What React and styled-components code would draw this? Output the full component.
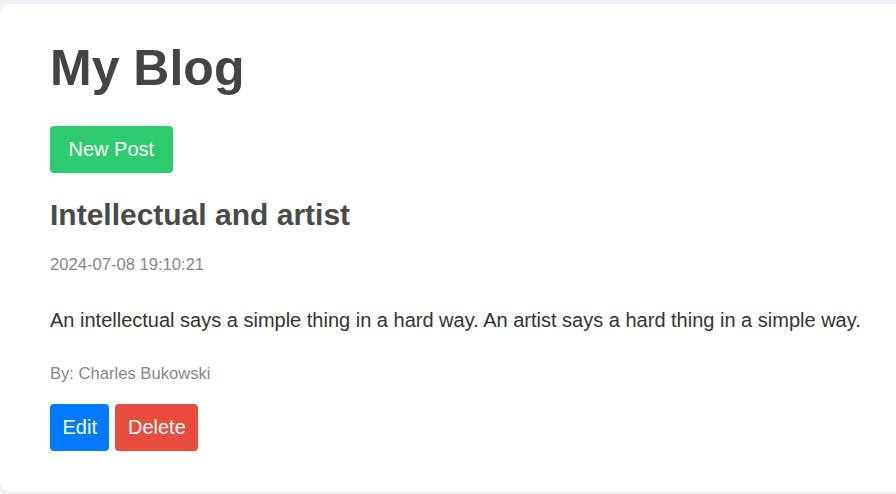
import React from "react";
import styled, { createGlobalStyle } from "styled-components";

const Global = createGlobalStyle`
  html, body { margin: 0; padding: 0; }
  body {
    background: #f0f2f5;
    font-family: "Liberation Sans", Arial, sans-serif;
    overflow: hidden;
  }
`;

const Page = styled.div`
  padding-top: 4px;
  width: 920px;
`;

const Card = styled.main`
  background: #ffffff;
  border-radius: 10px;
  padding: 36px 50px 41px;
  box-shadow: 0 1px 2px rgba(0, 0, 0, 0.08);
`;

const Title = styled.h1`
  margin: 0 0 29px;
  font-size: 50px;
  line-height: 57px;
  font-weight: bold;
  color: #444;
`;

const Button = styled.button`
  display: block;
  border: none;
  border-radius: 4px;
  font-family: inherit;
  font-size: 20px;
  color: #fff;
  padding: 12px ${(p) => p.$px || 18.5}px;
  background: ${(p) => p.$bg};
  cursor: pointer;
  line-height: 23px;
`;

const Post = styled.article`
  margin-top: 25px;
`;

const PostTitle = styled.h2`
  margin: 0 0 23px;
  font-size: 30px;
  line-height: 34px;
  color: #4a4a4a;
`;

const Meta = styled.p`
  margin: 0;
  font-size: 16.6px;
  line-height: 19px;
  color: #888;
`;

const Body = styled.p`
  margin: 35px 0 32px;
  font-size: 20px;
  line-height: 23px;
  color: #333;
`;

const Actions = styled.div`
  display: flex;
  gap: 6px;
  margin-top: 21px;
`;

export default function App() {
  return (
    <>
      <Global />
      <Page>
        <Card>
          <Title>My Blog</Title>
          <Button $bg="#2ecc71">New Post</Button>
          <Post>
            <PostTitle>Intellectual and artist</PostTitle>
            <Meta>2024-07-08 19:10:21</Meta>
            <Body>
              An intellectual says a simple thing in a hard way. An artist says a hard thing in a simple way.
            </Body>
            <Meta>By: Charles Bukowski</Meta>
            <Actions>
              <Button $bg="#007bff" $px={12.5}>Edit</Button>
              <Button $bg="#e74c3c" $px={12.5}>Delete</Button>
            </Actions>
          </Post>
        </Card>
      </Page>
    </>
  );
}
